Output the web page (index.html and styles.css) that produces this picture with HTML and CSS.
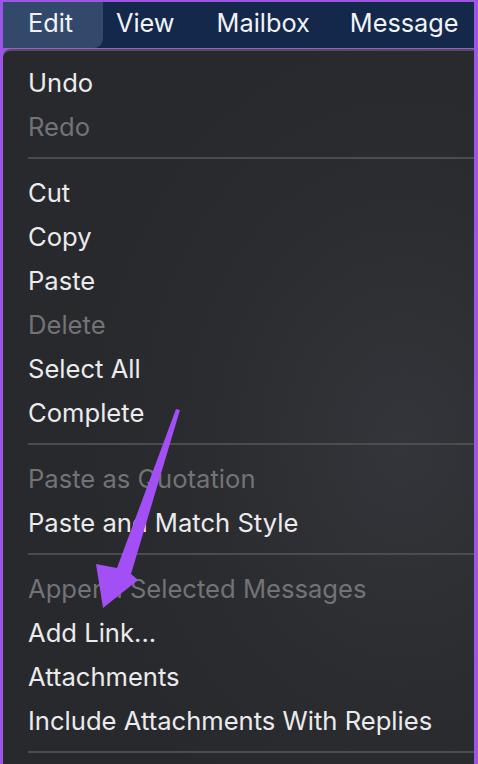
FILE: index.html
```html
<!DOCTYPE html>
<html>
<head>
<meta charset="utf-8">
<link rel="stylesheet" href="styles.css">
</head>
<body>
<div class="frame">
  <div class="menubar">
    <div class="mb-item active">Edit</div>
    <div class="mb-item view">View</div>
    <div class="mb-item mailbox">Mailbox</div>
    <div class="mb-item message">Message</div>
  </div>
  <div class="menu">
    <div class="item">Undo</div>
    <div class="item off">Redo</div>
    <div class="sep"></div>
    <div class="item">Cut</div>
    <div class="item">Copy</div>
    <div class="item">Paste</div>
    <div class="item off">Delete</div>
    <div class="item">Select All</div>
    <div class="item">Complete</div>
    <div class="sep"></div>
    <div class="item off">Paste as Quotation</div>
    <div class="item">Paste and Match Style</div>
    <div class="sep"></div>
    <div class="item off">Append Selected Messages</div>
    <div class="item">Add Link...</div>
    <div class="item">Attachments</div>
    <div class="item">Include Attachments With Replies</div>
    <div class="sep last"></div>
  </div>
  <svg class="arrow" width="478" height="764" viewBox="0 0 478 764">
    <polygon points="176,409 180,410 131,574 138,580 103,608 96,564 117,568" fill="#a24ff5"/>
  </svg>
</div>
</body>
</html>
```

FILE: styles.css
```css
html, body {
  margin: 0;
  padding: 0;
  background: #9c55e4;
}
.frame {
  position: relative;
  width: 478px;
  height: 764px;
  box-sizing: border-box;
  padding: 2px 3px 3px 3px;
  background: #9c55e4;
  display: flex;
  flex-direction: column;
  overflow: hidden;
  font-family: Inter, "Noto Sans", sans-serif;
}
.menubar {
  height: 46px;
  flex: none;
  background: #13284a;
  display: flex;
  color: #f1f3f6;
  font-size: 25.3px;
  margin-right: 1px;
}
.mb-item {
  height: 46px;
  display: flex;
  align-items: center;
  box-sizing: border-box;
  padding-bottom: 5px;
}
.mb-item.active {
  width: 100px;
  padding-left: 25px;
  background: #33496b;
  border-radius: 0 0 9px 0;
}
.mb-item.view { margin-left: 13px; }
.mb-item.mailbox { margin-left: 42px; }
.mb-item.message { margin-left: 40px; }
.menu {
  flex: 1;
  margin-top: 1px;
  margin-right: 1px;
  border-top: 2px solid #4f5054;
  border-top-left-radius: 8px;
  background: radial-gradient(ellipse 70% 60% at 85% 55%, #34353a 0%, #2b2c30 60%, #28292c 100%);
  padding-top: 9px;
  color: #ebebed;
  font-size: 25.6px;
}
.item {
  height: 44px;
  display: flex;
  align-items: center;
  padding-left: 25px;
}
.item.off { color: #727377; }
.sep {
  height: 2px;
  margin: 9px 0 11px 25px;
  background: #4b4c50;
}
.arrow {
  position: absolute;
  left: 0;
  top: 0;
}
```
